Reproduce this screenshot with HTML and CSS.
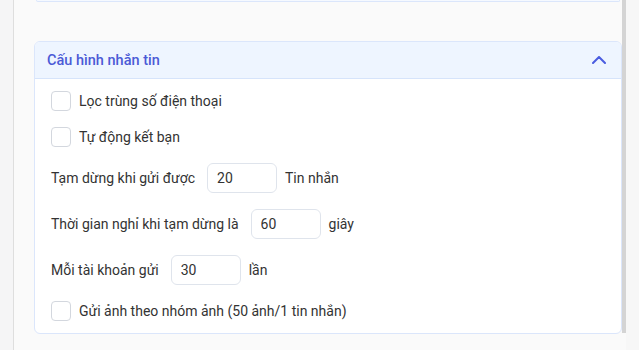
FILE: index.html
```html
<!DOCTYPE html>
<html lang="vi">
<head>
    <meta charset="UTF-8">
    <meta name="viewport" content="width=device-width, initial-scale=1.0">
    <title>Cấu hình nhắn tin</title>
    <link rel="stylesheet" href="styles.css">
</head>
<body>
    <div class="layout">
        <!-- thanh bên trái -->
        <div class="side"></div>

        <!-- nội dung chính -->
        <main class="content">
            <div class="prev-card"></div>

            <section class="card">
                <div class="card-header">
                    <h2>Cấu hình nhắn tin</h2>
                    <svg class="chevron" width="14" height="8" viewBox="0 0 14 8">
                        <polyline points="1,7 7,1 13,7" fill="none" stroke="#4b5de0" stroke-width="2" stroke-linecap="round" stroke-linejoin="round"/>
                    </svg>
                </div>
                <div class="card-body">
                    <label class="row">
                        <span class="check"></span>
                        <span>Lọc trùng số điện thoại</span>
                    </label>
                    <label class="row">
                        <span class="check"></span>
                        <span>Tự động kết bạn</span>
                    </label>
                    <div class="row field">
                        <span>Tạm dừng khi gửi được</span>
                        <input type="text" value="20">
                        <span>Tin nhắn</span>
                    </div>
                    <div class="row field">
                        <span>Thời gian nghỉ khi tạm dừng là</span>
                        <input type="text" value="60">
                        <span>giây</span>
                    </div>
                    <div class="row field">
                        <span>Mỗi tài khoản gửi</span>
                        <input type="text" value="30">
                        <span>lần</span>
                    </div>
                    <label class="row">
                        <span class="check"></span>
                        <span>Gửi ảnh theo nhóm ảnh (50 ảnh/1 tin nhắn)</span>
                    </label>
                </div>
            </section>
        </main>

        <div class="scrollbar"></div>
        <div class="gutter"></div>
    </div>
</body>
</html>
```

FILE: styles.css
```css
/* khung trang */
body {
    font-family: 'Roboto', 'Noto Sans', sans-serif;
    margin: 0;
    padding: 0;
    background: #fafafa;
    color: #333333;
}

.layout {
    display: flex;
    height: 350px;
}

.side {
    width: 13px;
    background: #f5f5f6;
    border-right: 1px solid #dedede;
}

.content {
    flex: 1;
    padding-left: 20px;
}

.prev-card {
    height: 1px;
    margin: 0 2px;
    border: 1px solid #dbe6fb;
    border-top: none;
    border-radius: 0 0 6px 6px;
    background: #f5f9ff;
}

/* thẻ cấu hình */
.card {
    margin-top: 39px;
    background: #ffffff;
    border: 1px solid #dbe6fb;
    border-radius: 6px;
    overflow: hidden;
}

.card-header {
    display: flex;
    align-items: center;
    justify-content: space-between;
    height: 36px;
    padding: 0 15px 0 12px;
    background: #eef5ff;
    border-bottom: 1px solid #d6e4fb;
}

.card-header h2 {
    margin: 0;
    font-size: 14.5px;
    font-weight: 500;
    color: #4b5ad6;
}

.card-body {
    display: flex;
    flex-direction: column;
    gap: 16px;
    padding: 12px 16px 12px;
}

.row {
    display: flex;
    align-items: center;
    font-size: 14px;
    color: #333333;
}

.check {
    width: 18px;
    height: 18px;
    margin-right: 8px;
    border: 1px solid #d3d7de;
    border-radius: 4px;
    background: #ffffff;
}

.field input {
    width: 70px;
    height: 30px;
    box-sizing: border-box;
    margin: 0 8px 0 12px;
    padding: 0 9px;
    border: 1px solid #dfe4ec;
    border-radius: 6px;
    font-family: inherit;
    font-size: 14px;
    color: #333333;
    outline: none;
}

.scrollbar {
    width: 4px;
    height: 333px;
    background: #d4d4d4;
}

.gutter {
    width: 13px;
    background: #f7f7f7;
}
```
